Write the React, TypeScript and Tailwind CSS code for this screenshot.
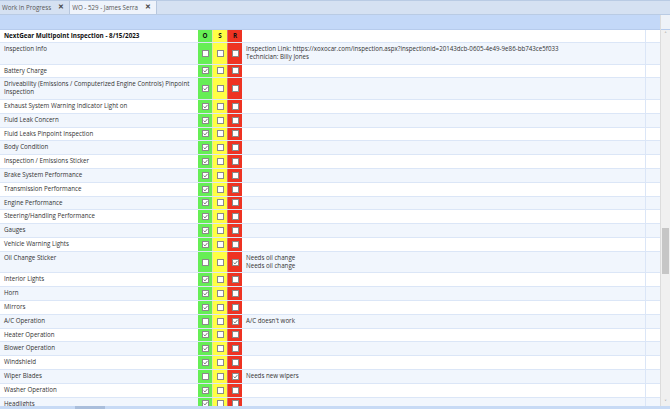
import React from "react";

interface InspectionRow {
  name: string[];
  status: "" | "O" | "S" | "R";
  notes?: string[];
}

const rows: InspectionRow[] = [
  {
    name: ["Inspection Info"],
    status: "",
    notes: [
      "Inspection Link: https://xoxocar.com/inspection.aspx?inspectionid=20143dcb-0605-4e49-9e86-bb743ce5f033",
      "Technician: Billy Jones",
    ],
  },
  { name: ["Battery Charge"], status: "O" },
  { name: ["Driveability (Emissions / Computerized Engine Controls) Pinpoint", "Inspection"], status: "O" },
  { name: ["Exhaust System Warning Indicator Light on"], status: "O" },
  { name: ["Fluid Leak Concern"], status: "O" },
  { name: ["Fluid Leaks Pinpoint Inspection"], status: "O" },
  { name: ["Body Condition"], status: "O" },
  { name: ["Inspection / Emissions Sticker"], status: "O" },
  { name: ["Brake System Performance"], status: "O" },
  { name: ["Transmission Performance"], status: "O" },
  { name: ["Engine Performance"], status: "O" },
  { name: ["Steering/Handling Performance"], status: "O" },
  { name: ["Gauges"], status: "O" },
  { name: ["Vehicle Warning Lights"], status: "O" },
  { name: ["Oil Change Sticker"], status: "R", notes: ["Needs oil change", "Needs oil change"] },
  { name: ["Interior Lights"], status: "O" },
  { name: ["Horn"], status: "O" },
  { name: ["Mirrors"], status: "O" },
  { name: ["A/C Operation"], status: "R", notes: ["A/C doesn't work"] },
  { name: ["Heater Operation"], status: "O" },
  { name: ["Blower Operation"], status: "O" },
  { name: ["Windshield"], status: "O" },
  { name: ["Wiper Blades"], status: "R", notes: ["Needs new wipers"] },
  { name: ["Washer Operation"], status: "O" },
  { name: ["Headlights"], status: "O" },
];

const Box = ({ checked }: { checked: boolean }) => (
  <div className="w-[7px] h-[7px] border border-[#8a8a8a] bg-white flex items-center justify-center">
    {checked && (
      <svg width="5" height="5" viewBox="0 0 5 5">
        <path d="M0.6 2.5 L2 3.9 L4.5 0.9" fill="none" stroke="#6a6a6a" strokeWidth="0.9" />
      </svg>
    )}
  </div>
);

const Tab = ({ label, active }: { label: string; active?: boolean }) => (
  <div
    className={`h-full flex items-center gap-[7px] pl-[2px] pr-[5px] border-r border-[#b7c7de] ${
      active ? "bg-[#eef3fb]" : "bg-[#d5e1f2]"
    }`}
  >
    <span className="text-[#555] text-[6.2px] whitespace-nowrap">{label}</span>
    <span className="text-[#444] text-[6.5px] font-bold leading-none">✕</span>
  </div>
);

export default function App() {
  return (
    <div
      className="w-[670px] h-[409px] overflow-hidden flex flex-col bg-[#c7daf5] text-[#333]"
      style={{ fontFamily: '"Open Sans", "Noto Sans", sans-serif' }}
    >
      {/* tab strip */}
      <div className="h-[15px] flex border-t border-[#9fb1c9] bg-[#d5e1f2] border-b border-[#b9cbe4]">
        <Tab label="Work In Progress" />
        <Tab label="WO - 529 - James Serra" active />
      </div>

      <div className="flex-1 flex min-h-0">
        <div className="flex-1 flex flex-col min-w-0">
          <div className="h-[15px] bg-[#c3d8f8] border-b border-[#b6cbec]" />
          <div className="flex-1 overflow-hidden bg-white">
            {/* header */}
            <div className="flex h-[13px] border-b border-[#dbe6f7]">
              <div className="w-[198px] pl-[4px] flex items-center font-bold text-[6.3px] text-[#111] whitespace-nowrap">
                NextGear Multipoint Inspection - 8/15/2023
              </div>
              <div className="w-[14px] bg-[#66ee55] flex items-center justify-center font-bold text-[6.3px] text-[#111]">O</div>
              <div className="w-[15px] bg-[#ffff44] border-l border-[#e6e6a0] flex items-center justify-center font-bold text-[6.3px] text-[#111]">S</div>
              <div className="w-[15px] bg-[#ee3322] border-l border-[#d87070] flex items-center justify-center font-bold text-[6.3px] text-[#111]">R</div>
              <div className="flex-1" />
              <div className="w-[15px] border-l border-[#dbe6f7]" />
            </div>

            {rows.map((row, i) => {
              const tall = row.name.length > 1 || (row.notes?.length ?? 0) > 1;
              const alt = i % 2 === 0;
              return (
                <div
                  key={i}
                  className={`flex border-b border-[#dbe6f7] ${tall ? "h-[21.6px]" : "h-[13.8px]"} ${
                    alt ? "bg-[#f1f6fd]" : "bg-white"
                  }`}
                >
                  <div className="w-[198px] pl-[4px] pt-[2px] text-[6.2px] leading-[8px] text-[#333] whitespace-nowrap overflow-hidden">
                    {row.name.map((n) => (
                      <div key={n}>{n}</div>
                    ))}
                  </div>
                  <div className="w-[14px] bg-[#66ee55] flex items-center justify-center">
                    <Box checked={row.status === "O"} />
                  </div>
                  <div className="w-[15px] bg-[#ffff44] border-l border-[#e6e6a0] flex items-center justify-center">
                    <Box checked={row.status === "S"} />
                  </div>
                  <div className="w-[15px] bg-[#ee3322] border-l border-[#d87070] flex items-center justify-center">
                    <Box checked={row.status === "R"} />
                  </div>
                  <div className="flex-1 pl-[4px] pt-[2px] text-[6.2px] leading-[8px] text-[#333] whitespace-nowrap overflow-hidden">
                    {row.notes?.map((n, k) => (
                      <div key={k}>{n}</div>
                    ))}
                  </div>
                  <div className="w-[15px] border-l border-[#dbe6f7]" />
                </div>
              );
            })}
          </div>
        </div>

        {/* vertical scrollbar */}
        <div className="w-[10px] bg-[#f0f0f0] border-l border-[#dcdcdc] flex flex-col items-center">
          <div className="h-[15px] w-full bg-[#eef2f8] border-b border-[#b6cbec]" />
          <div className="h-[8px] flex items-center justify-center text-[6px] text-[#555] leading-none">˄</div>
          <div className="h-[190px]" />
          <div className="w-[7px] h-[46px] bg-[#c6c6c6]" />
          <div className="flex-1" />
          <div className="h-[8px] flex items-center justify-center text-[6px] text-[#555] leading-none">˅</div>
        </div>
      </div>

      {/* horizontal scroll strip */}
      <div className="h-[3px] bg-[#c7daf5] flex">
        <div className="w-[75px]" />
        <div className="w-[30px] bg-[#a9bedc]" />
      </div>
    </div>
  );
}
